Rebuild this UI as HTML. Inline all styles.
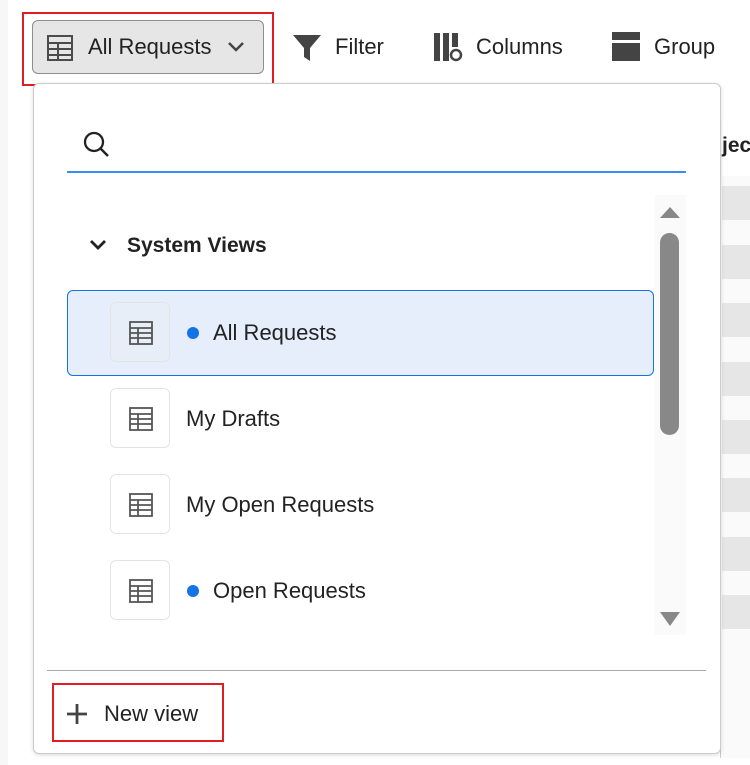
<!DOCTYPE html><html><head><style>
body{margin:0;width:750px;height:765px;background:#fff;font-family:"Liberation Sans",sans-serif;position:relative;overflow:hidden;color:#222}
.a{position:absolute}
.bar{position:absolute;left:722px;width:28px;height:34px;background:#e6e6e6}
.ib{position:absolute;left:110px;width:60px;height:60px;border:1px solid #e3e3e3;border-radius:6px;background:#fff;box-sizing:border-box}
.ib svg{position:absolute;left:18px;top:18px}
.t{position:absolute;font-size:22px;color:#222}
.dot{position:absolute;left:187px;width:12px;height:12px;border-radius:6px;background:#1473e6}
</style></head><body>
<div class="a" style="left:0;top:0;width:8px;height:765px;background:#f7f7f7"></div>
<div class="a" style="left:720px;top:118px;width:30px;height:640px;background:#fafafa;border-left:1px solid #ccc"></div>
<div class="a" style="left:722px;top:118px;width:28px;height:58px;background:#fff"></div>
<div class="a t" style="left:722px;top:134px;font-weight:bold;font-size:21px">jec</div>
<div class="bar" style="top:186px"></div><div class="bar" style="top:245px"></div><div class="bar" style="top:303px"></div><div class="bar" style="top:362px"></div><div class="bar" style="top:420px"></div><div class="bar" style="top:478px"></div><div class="bar" style="top:537px"></div><div class="bar" style="top:595px"></div>

<div class="a" style="left:22px;top:12px;width:248px;height:70px;border:2px solid #e31b23"></div>
<div class="a" style="left:32px;top:20px;width:230px;height:52px;background:#e6e6e6;border:1px solid #8e8e8e;border-radius:6px"></div>
<svg class="a" style="left:46px;top:34px" width="28" height="28" viewBox="0 0 28 28"><g fill="none" stroke="#4b4b4b" stroke-width="2"><rect x="2" y="2" width="24" height="24"/><path d="M2 9H26M2 15H26M2 21H26M12 9V26"/></g></svg>
<div class="a t" style="left:88px;top:34px">All Requests</div>
<svg class="a" style="left:226px;top:40px" width="20" height="14"><path d="M3 3l7 7 7-7" fill="none" stroke="#444" stroke-width="2.5"/></svg>
<svg class="a" style="left:292px;top:33px" width="30" height="30"><path d="M1 2H29L18 15V28L12 24V15Z" fill="#444"/></svg>
<div class="a t" style="left:335px;top:34px">Filter</div>
<svg class="a" style="left:434px;top:33px" width="32" height="30"><rect x="0" y="0" width="6" height="28" fill="#444"/><rect x="9" y="0" width="6" height="28" fill="#444"/><rect x="18" y="0" width="6" height="14" fill="#444"/><circle cx="22" cy="22" r="5" fill="none" stroke="#444" stroke-width="2.5"/></svg>
<div class="a t" style="left:476px;top:34px">Columns</div>
<svg class="a" style="left:612px;top:32px" width="30" height="30"><rect x="0" y="0" width="28" height="8" fill="#444"/><rect x="0" y="11" width="28" height="18" fill="#444"/></svg>
<div class="a t" style="left:654px;top:34px">Group</div>

<div class="a" style="left:33px;top:83px;width:686px;height:669px;background:#fff;border:1px solid #ccc;border-radius:6px;box-shadow:0 1px 4px rgba(0,0,0,.15)"></div>
<svg class="a" style="left:82px;top:130px" width="30" height="30"><circle cx="12" cy="12" r="9" fill="none" stroke="#222" stroke-width="2.3"/><path d="M18.5 18.5L26 26" stroke="#222" stroke-width="2.5"/></svg>
<div class="a" style="left:67px;top:171px;width:619px;height:2px;background:#378ef0"></div>
<div class="a" style="left:655px;top:195px;width:31px;height:440px;background:#fafafa"></div>
<svg class="a" style="left:658px;top:203px" width="24" height="16"><path d="M2 15L12 4 22 15Z" fill="#888"/></svg>
<div class="a" style="left:660px;top:233px;width:19px;height:202px;background:#888;border-radius:10px"></div>
<svg class="a" style="left:658px;top:610px" width="24" height="18"><path d="M2 2H22L12 16Z" fill="#888"/></svg>
<svg class="a" style="left:88px;top:238px" width="20" height="16"><path d="M3 3l7 7 7-7" fill="none" stroke="#222" stroke-width="2.8"/></svg>
<div class="a t" style="left:127px;top:234px;font-weight:bold;font-size:21px">System Views</div>
<div class="a" style="left:67px;top:290px;width:585px;height:84px;background:#e5eefa;border:1px solid #1473e6;border-radius:6px"></div>
<div class="ib" style="top:302px;background:#e8eef7"><svg width="24" height="24"><g fill="none" stroke="#555" stroke-width="1.8"><rect x="1" y="1" width="22" height="22"/><path d="M1 7H23M1 12H23M1 17H23M9 7V23"/></g></svg></div>
<div class="dot" style="top:327px"></div><div class="t" style="left:213px;top:320px">All Requests</div>
<div class="ib" style="top:388px"><svg width="24" height="24"><g fill="none" stroke="#555" stroke-width="1.8"><rect x="1" y="1" width="22" height="22"/><path d="M1 7H23M1 12H23M1 17H23M9 7V23"/></g></svg></div>
<div class="t" style="left:186px;top:406px">My Drafts</div>
<div class="ib" style="top:474px"><svg width="24" height="24"><g fill="none" stroke="#555" stroke-width="1.8"><rect x="1" y="1" width="22" height="22"/><path d="M1 7H23M1 12H23M1 17H23M9 7V23"/></g></svg></div>
<div class="t" style="left:186px;top:492px">My Open Requests</div>
<div class="ib" style="top:560px"><svg width="24" height="24"><g fill="none" stroke="#555" stroke-width="1.8"><rect x="1" y="1" width="22" height="22"/><path d="M1 7H23M1 12H23M1 17H23M9 7V23"/></g></svg></div>
<div class="dot" style="top:585px"></div><div class="t" style="left:213px;top:578px">Open Requests</div>
<div class="a" style="left:47px;top:670px;width:659px;height:1px;background:#aaa"></div>
<div class="a" style="left:52px;top:683px;width:168px;height:55px;border:2px solid #e31b23"></div>
<svg class="a" style="left:65px;top:702px" width="24" height="24"><path d="M12 2V22M2 12H22" stroke="#444" stroke-width="2.8"/></svg>
<div class="t" style="left:104px;top:701px">New view</div>
</body></html>
